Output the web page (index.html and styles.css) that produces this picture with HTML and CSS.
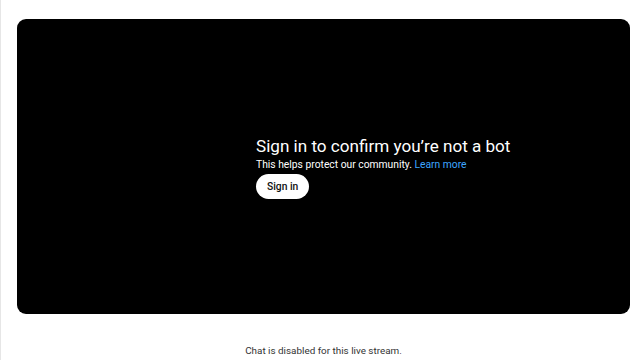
FILE: index.html
```html
<!DOCTYPE html>
<html>
<head>
<meta charset="utf-8">
<link rel="stylesheet" href="styles.css">
</head>
<body>
<div class="page">
  <div class="player">
    <div class="message">
      <div class="title">Sign in to confirm you’re not a bot</div>
      <div class="sub">This helps protect our community. <span class="link">Learn more</span></div>
      <button class="btn">Sign in</button>
    </div>
  </div>
  <div class="chat">Chat is disabled for this live stream.</div>
</div>
</body>
</html>
```

FILE: styles.css
```css
html, body {
  margin: 0;
  padding: 0;
  background: #fff;
  width: 640px;
  height: 360px;
  overflow: hidden;
  font-family: Roboto, "Liberation Sans", Arial, sans-serif;
}
.page {
  display: flex;
  flex-direction: column;
  padding: 19px 10px 0 16px;
  border-left: 1px solid #e6e6e6;
  height: 360px;
  box-sizing: border-box;
}
.player {
  height: 295px;
  background: #000;
  border-radius: 9px;
  display: flex;
  align-items: center;
  padding-left: 239px;
}
.message {
  display: flex;
  flex-direction: column;
  align-items: flex-start;
  color: #fff;
  margin-top: 2px;
}
.title {
  font-size: 17.1px;
  line-height: 21px;
}
.sub {
  font-size: 10.3px;
  line-height: 13px;
  margin-top: 1px;
}
.link {
  color: #3ea6ff;
}
.btn {
  margin-top: 3px;
  height: 25px;
  padding: 0 11px;
  border: none;
  border-radius: 13px;
  background: #fff;
  color: #0f0f0f;
  font-family: Roboto, "Liberation Sans", Arial, sans-serif;
  font-size: 10.3px;
  font-weight: 500;
}
.chat {
  margin-top: 30px;
  text-align: center;
  font-size: 9.9px;
  color: #333;
  line-height: 13px;
}
```
